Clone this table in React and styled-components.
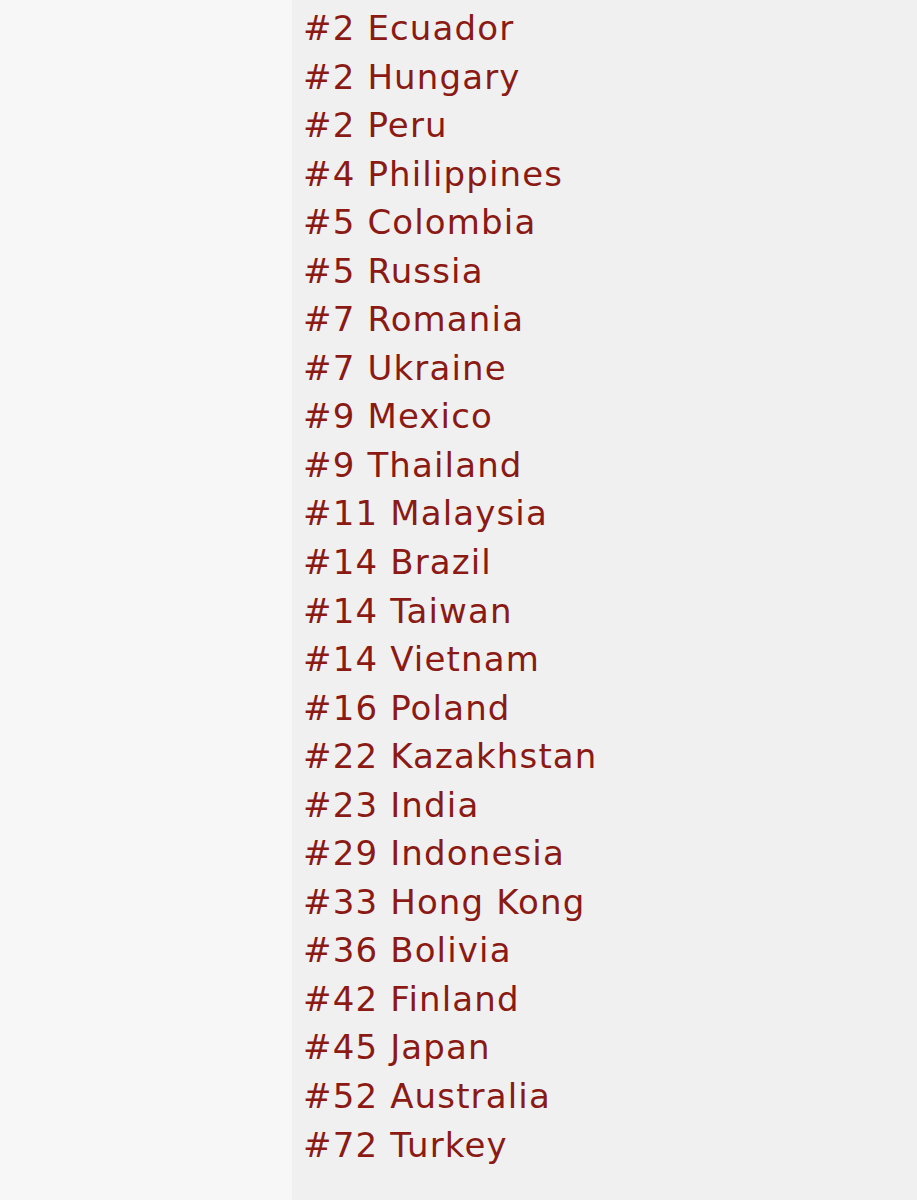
import React from 'react'
import styled, { createGlobalStyle } from 'styled-components';

const GlobalStyle = createGlobalStyle`
    html, body {
        margin: 0;
        padding: 0;
        background: #f7f7f7;
    }
`

const ranks = [
    ['#2', 'Ecuador'],
    ['#2', 'Hungary'],
    ['#2', 'Peru'],
    ['#4', 'Philippines'],
    ['#5', 'Colombia'],
    ['#5', 'Russia'],
    ['#7', 'Romania'],
    ['#7', 'Ukraine'],
    ['#9', 'Mexico'],
    ['#9', 'Thailand'],
    ['#11', 'Malaysia'],
    ['#14', 'Brazil'],
    ['#14', 'Taiwan'],
    ['#14', 'Vietnam'],
    ['#16', 'Poland'],
    ['#22', 'Kazakhstan'],
    ['#23', 'India'],
    ['#29', 'Indonesia'],
    ['#33', 'Hong Kong'],
    ['#36', 'Bolivia'],
    ['#42', 'Finland'],
    ['#45', 'Japan'],
    ['#52', 'Australia'],
    ['#72', 'Turkey'],
]

const App = () => {
    return (
        <Page>
            <GlobalStyle />
            <Gutter />
            <Panel>
                <List>
                    {ranks.map(([rank, country]) => (
                        <Row key={country}>{rank} {country}</Row>
                    ))}
                </List>
            </Panel>
        </Page>
    )
}

const Page = styled.div`
    display: flex;
    min-height: 1200px;
    background: #f7f7f7;
    overflow: hidden;
`

const Gutter = styled.div`
    width: 292px;
    flex-shrink: 0;
`

const Panel = styled.div`
    flex: 1;
    background: #f0f0f0;
    padding: 4px 0 0 11px;
`

const List = styled.ul`
    list-style: none;
    margin: 0;
    padding: 0;
`

const Row = styled.li`
    font-family: "DejaVu Sans", Verdana, sans-serif;
    font-size: 34px;
    line-height: 48.55px;
    letter-spacing: 1.15px;
    color: #8a1a13;
    white-space: nowrap;
`

export default App
